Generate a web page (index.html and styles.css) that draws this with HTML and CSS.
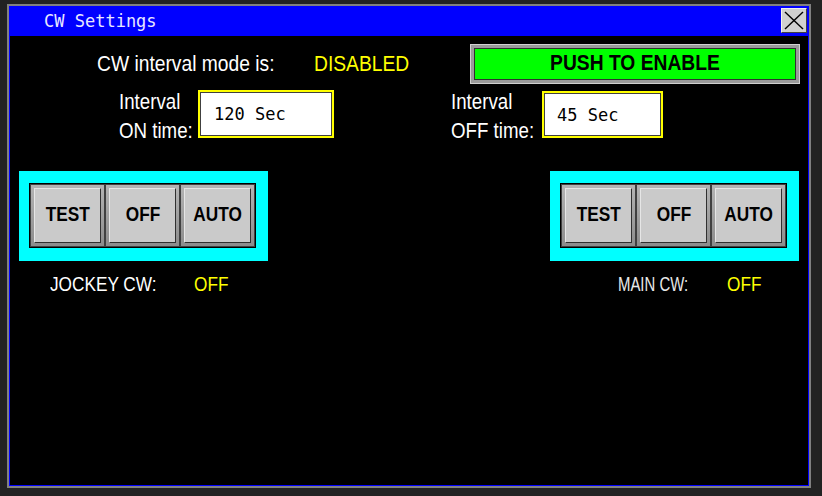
FILE: index.html
```html
<!DOCTYPE html>
<html lang="en">
<head>
    <meta charset="UTF-8">
    <title>CW Settings</title>
    <link rel="stylesheet" href="styles.css">
</head>
<body>
    <div class="window">
        <div class="frame">
            <div class="titlebar">
                <span class="title">CW Settings</span>
                <div class="close-btn">
                    <svg width="24" height="23" viewBox="0 0 24 23">
                        <line x1="3" y1="3" x2="21" y2="20" stroke="#000" stroke-width="1.4"/>
                        <line x1="21" y1="3" x2="3" y2="20" stroke="#000" stroke-width="1.4"/>
                    </svg>
                </div>
            </div>
            <div class="content">
                <div class="mode-row">
                    <span class="mode-label narrow wide">CW interval mode is:</span>
                    <span class="mode-value narrow wide">DISABLED</span>
                    <div class="enable-btn">
                        <div class="enable-face"><span class="narrow-c wide">PUSH TO ENABLE</span></div>
                    </div>
                </div>
                <div class="interval-row">
                    <div class="interval-label on-label narrow">Interval<br>ON time:</div>
                    <div class="value-box on-box">120 Sec</div>
                    <div class="interval-label off-label narrow">Interval<br>OFF time:</div>
                    <div class="value-box off-box">45 Sec</div>
                </div>
                <div class="pump-row">
                    <div class="pump">
                        <div class="switch-panel">
                            <div class="switch-group">
                                <div class="sw-btn"><div class="sw-face"><span class="narrow-c">TEST</span></div></div>
                                <div class="sw-btn"><div class="sw-face"><span class="narrow-c">OFF</span></div></div>
                                <div class="sw-btn"><div class="sw-face"><span class="narrow-c">AUTO</span></div></div>
                            </div>
                        </div>
                        <div class="status jockey">
                            <span class="status-label narrow">JOCKEY CW:</span>
                            <span class="status-value narrow">OFF</span>
                        </div>
                    </div>
                    <div class="pump">
                        <div class="switch-panel">
                            <div class="switch-group">
                                <div class="sw-btn"><div class="sw-face"><span class="narrow-c">TEST</span></div></div>
                                <div class="sw-btn"><div class="sw-face"><span class="narrow-c">OFF</span></div></div>
                                <div class="sw-btn"><div class="sw-face"><span class="narrow-c">AUTO</span></div></div>
                            </div>
                        </div>
                        <div class="status main">
                            <span class="status-label narrow thin">MAIN CW:</span>
                            <span class="status-value narrow">OFF</span>
                        </div>
                    </div>
                </div>
            </div>
        </div>
    </div>
</body>
</html>
```

FILE: styles.css
```css
body {
    margin: 0;
    padding: 4px 0 0 7px;
    background-color: #222222;
    font-family: "Liberation Sans", Arial, sans-serif;
    height: 492px;
    overflow: hidden;
}
/* the panel font is a narrow sans, no narrow face is installed */
.narrow {
    display: inline-block;
    white-space: nowrap;
    transform: scaleX(0.82);
    transform-origin: left center;
}
.narrow-c {
    display: inline-block;
    white-space: nowrap;
    transform: scaleX(0.82);
    transform-origin: center;
}
.narrow.wide,
.narrow-c.wide {
    transform: scaleX(0.875);
}
.window {
    width: 800px;
    border: 2px solid #808080;
}
.frame {
    border: 1px solid #0000ff;
}
.titlebar {
    height: 29px;
    background: #0000ff;
    display: flex;
    align-items: flex-start;
}
.title {
    font-family: "DejaVu Sans Mono", monospace;
    font-size: 17px;
    line-height: 29px;
    color: #e8e8ff;
    padding-left: 34px;
}
.close-btn {
    margin: 1px 1px 0 auto;
    width: 26px;
    height: 25px;
    box-sizing: border-box;
    background: #d0d0d0;
    border: 1px solid;
    border-color: #f0f0f0 #404040 #404040 #f0f0f0;
}
.close-btn svg {
    display: block;
}
.content {
    height: 449px;
    background: #000;
    color: #fff;
}
.mode-row {
    display: flex;
    align-items: center;
    padding-top: 8px;
    padding-left: 87px;
    height: 40px;
    font-size: 22px;
}
.mode-label {
    width: 217px;
}
.mode-value {
    width: 156px;
    color: #ffff00;
}
.enable-btn {
    width: 330px;
    height: 40px;
    box-sizing: border-box;
    border: 1px solid #d0d0d0;
    padding: 3px;
    background: #9a9a9a;
}
.enable-face {
    height: 100%;
    box-sizing: border-box;
    border: 1px solid #303030;
    background: #00ff00;
    color: #000;
    font-weight: bold;
    font-size: 22px;
    text-align: center;
    line-height: 28px;
}
.interval-row {
    display: flex;
    align-items: center;
    margin-top: 6px;
    padding-left: 109px;
    height: 48px;
}
.interval-label {
    font-size: 22px;
    line-height: 29px;
    margin-top: 4px;
}
.interval-label.narrow {
    transform: scaleX(0.85);
}
.on-label {
    width: 79px;
}
.off-label {
    width: 91px;
    margin-left: 117px;
}
.value-box {
    box-sizing: border-box;
    height: 48px;
    border: 2px solid #ffff00;
    background: #fff;
    box-shadow: inset 0 0 0 1px #404040;
    color: #000;
    font-family: "DejaVu Sans Mono", monospace;
    font-size: 17px;
    line-height: 44px;
}
.on-box {
    width: 136px;
    padding-left: 14px;
}
.off-box {
    width: 121px;
    height: 47px;
    padding-left: 13px;
    margin-top: 1px;
}
.pump-row {
    display: flex;
    justify-content: space-between;
    padding: 0 9px;
    margin-top: 33px;
}
.pump {
    width: 249px;
}
.switch-panel {
    background: #00ffff;
    height: 90px;
    box-sizing: border-box;
    padding: 12px 0 0 10px;
}
.switch-group {
    display: flex;
    width: 227px;
    box-sizing: border-box;
    border: 1px solid #000;
}
.sw-btn {
    width: 75px;
    height: 63px;
    box-sizing: border-box;
    border: 1px solid #404040;
    padding: 3px;
    background: linear-gradient(#b4b4b4, #8c8c8c);
}
.sw-face {
    height: 100%;
    box-sizing: border-box;
    border: 1px solid;
    border-color: #e6e6e6 #303030 #303030 #e6e6e6;
    background: #cacaca;
    color: #000;
    font-weight: bold;
    font-size: 21px;
    display: flex;
    align-items: center;
    justify-content: center;
    padding-bottom: 3px;
}
.status {
    display: flex;
    margin-top: 11px;
    font-size: 21px;
    line-height: 24px;
}
.status-value {
    color: #ffff00;
}
.jockey {
    padding-left: 31px;
}
.jockey .status-label {
    width: 144px;
}
.main {
    padding-left: 68px;
}
.main .status-label {
    width: 109px;
    color: #e8e8e8;
}
.narrow.thin {
    transform: scaleX(0.71);
    font-weight: 300;
}
```
